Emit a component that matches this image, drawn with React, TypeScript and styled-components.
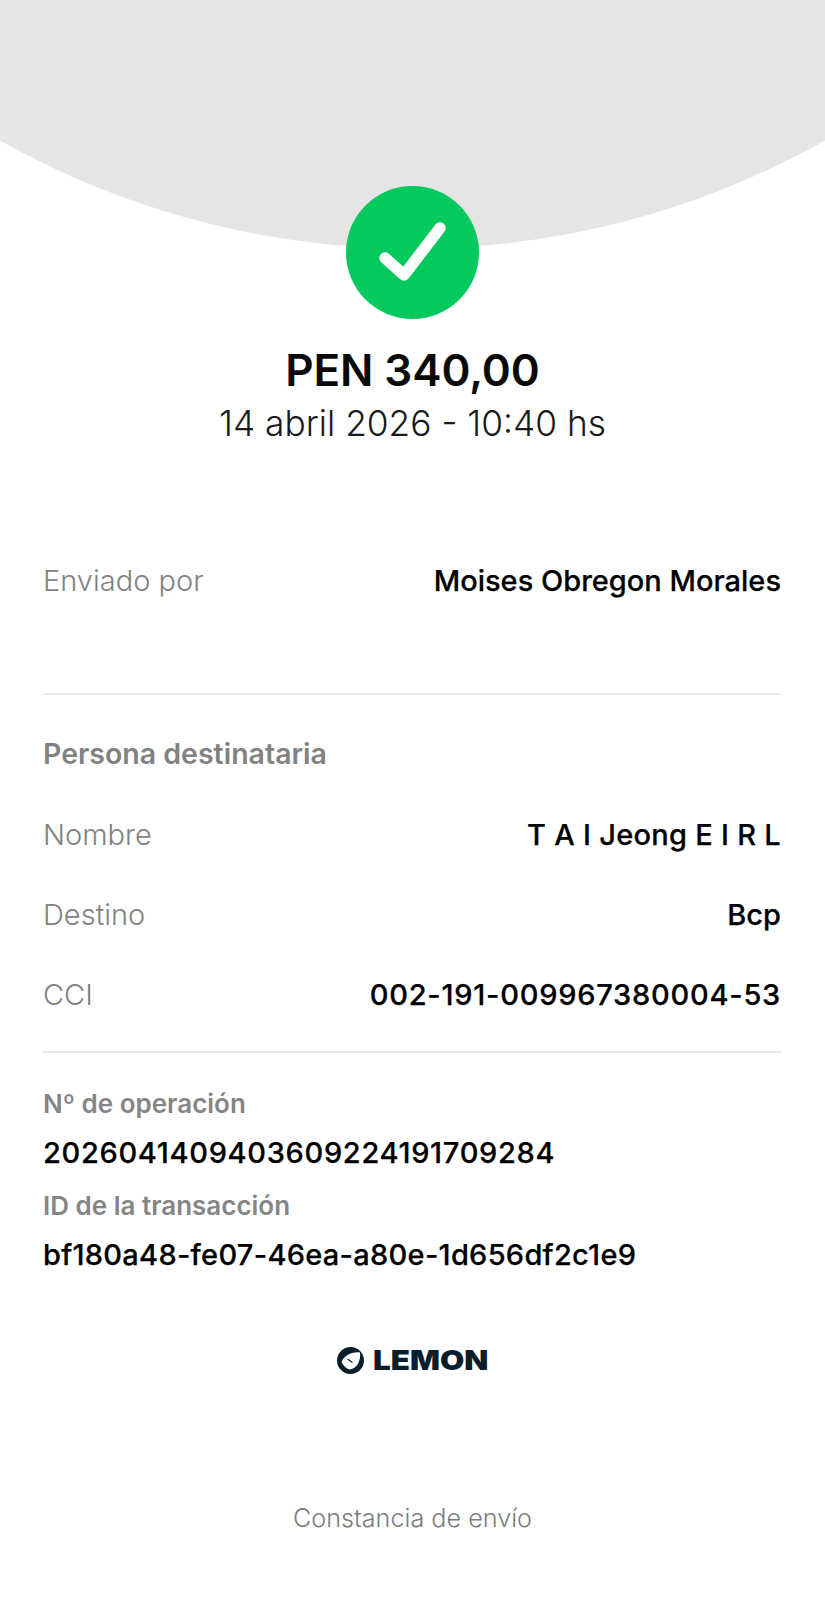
import styled, { createGlobalStyle } from "styled-components";

const GlobalStyle = createGlobalStyle`
  html, body {
    margin: 0;
    padding: 0;
    background: #ffffff;
  }
`;

const Page = styled.div`
  width: 825px;
  height: 1600px;
  overflow: hidden;
  background: #fff;
  font-family: Inter, "Liberation Sans", sans-serif;
  color: #0a0a0a;
`;

const Hero = styled.header`
  height: 248px;
  background: radial-gradient(circle 842px at 50% -593.5px, #e5e5e5 841.5px, #ffffff 842.5px);
`;

const Summary = styled.section`
  display: flex;
  flex-direction: column;
  align-items: center;
  margin-top: -62px;
`;

const Badge = styled.div`
  width: 133px;
  height: 133px;
  border-radius: 50%;
  background: #04c95c;
  display: flex;
  align-items: center;
  justify-content: center;
`;

const Amount = styled.div`
  margin-top: 25px;
  font-size: 44px;
  line-height: 52px;
  font-weight: 600;
  letter-spacing: -0.1px;
`;

const DateText = styled.div`
  margin-top: 7px;
  font-size: 35.3px;
  line-height: 42px;
  font-weight: 300;
  color: #1a1a1a;
`;

const Details = styled.main`
  padding: 0 44px 0 43px;
  margin-top: 95px;
`;

const Row = styled.div`
  display: flex;
  justify-content: space-between;
  align-items: center;
  height: 80px;
`;

const RowLabel = styled.span`
  font-size: 29px;
  font-weight: 300;
  color: #828282;
`;

const RowValue = styled.span<{ $tracking?: number }>`
  font-size: 29px;
  font-weight: 500;
  -webkit-text-stroke: 0.25px #000;
  color: #000;
  letter-spacing: ${(p) => p.$tracking ?? 0}px;
`;

const Divider = styled.hr<{ $top: number; $bottom: number }>`
  margin: ${(p) => p.$top}px 0 ${(p) => p.$bottom}px;
  border: 0;
  height: 2px;
  background: #e8e8e8;
`;

const SectionTitle = styled.div`
  margin-bottom: 22px;
  font-size: 28.5px;
  line-height: 36px;
  font-weight: 600;
  color: #828282;
`;

const CodeLabel = styled.div`
  font-size: 26px;
  line-height: 30px;
  font-weight: 600;
  color: #858585;
`;

const CodeValue = styled.div<{ $tracking: number }>`
  margin-top: 19px;
  margin-bottom: 23px;
  font-size: 29px;
  line-height: 30px;
  font-weight: 500;
  -webkit-text-stroke: 0.25px #000;
  color: #000;
  letter-spacing: ${(p) => p.$tracking}px;
`;

const Brand = styled.div`
  display: flex;
  align-items: center;
  justify-content: center;
  gap: 9px;
  margin-top: 76px;
  color: #0b1d2b;
`;

const BrandName = styled.span`
  display: block;
  width: 116px;
  font-size: 27.5px;
  line-height: 28px;
  font-weight: 900;
  white-space: nowrap;
  transform: scaleX(1.14);
  transform-origin: left center;
`;

const Caption = styled.div`
  margin-top: 128px;
  text-align: center;
  font-size: 25.2px;
  line-height: 32px;
  font-weight: 300;
  color: #7d7d7d;
`;

export default function App() {
  return (
    <Page>
      <GlobalStyle />
      <Hero />
      <Summary>
        <Badge>
          <svg width="133" height="133" viewBox="0 0 133 133" fill="none">
            <path
              d="M39 72 L58 89 L94 42"
              stroke="#fff"
              strokeWidth="11.5"
              strokeLinecap="round"
              strokeLinejoin="round"
            />
          </svg>
        </Badge>
        <Amount>PEN 340,00</Amount>
        <DateText>14 abril 2026 - 10:40 hs</DateText>
      </Summary>
      <Details>
        <Row>
          <RowLabel>Enviado por</RowLabel>
          <RowValue>Moises Obregon Morales</RowValue>
        </Row>
        <Divider $top={73} $bottom={41} />
        <SectionTitle>Persona destinataria</SectionTitle>
        <Row>
          <RowLabel>Nombre</RowLabel>
          <RowValue $tracking={0.28}>T A I Jeong E I R L</RowValue>
        </Row>
        <Row>
          <RowLabel>Destino</RowLabel>
          <RowValue>Bcp</RowValue>
        </Row>
        <Row>
          <RowLabel>CCI</RowLabel>
          <RowValue $tracking={0.75}>002-191-009967380004-53</RowValue>
        </Row>
        <Divider $top={17} $bottom={36} />
        <CodeLabel>Nº de operación</CodeLabel>
        <CodeValue $tracking={0.68}>2026041409403609224191709284</CodeValue>
        <CodeLabel>ID de la transacción</CodeLabel>
        <CodeValue $tracking={0.28}>bf180a48-fe07-46ea-a80e-1d656df2c1e9</CodeValue>
      </Details>
      <Brand>
        <svg width="27" height="27" viewBox="0 0 27 27">
          <circle cx="13.5" cy="13.5" r="13.5" fill="#0b1d2b" />
          <path d="M4.5 15 C7 9 14.5 4.5 23 5.5 C24 14 20 21 13 22.5 C9.5 22 6.5 19 4.5 15 Z" fill="#fff" />
          <path d="M10.5 12 L15.5 15.5" stroke="#0b1d2b" strokeWidth="1.2" />
        </svg>
        <BrandName>LEMON</BrandName>
      </Brand>
      <Caption>Constancia de envío</Caption>
    </Page>
  );
}
